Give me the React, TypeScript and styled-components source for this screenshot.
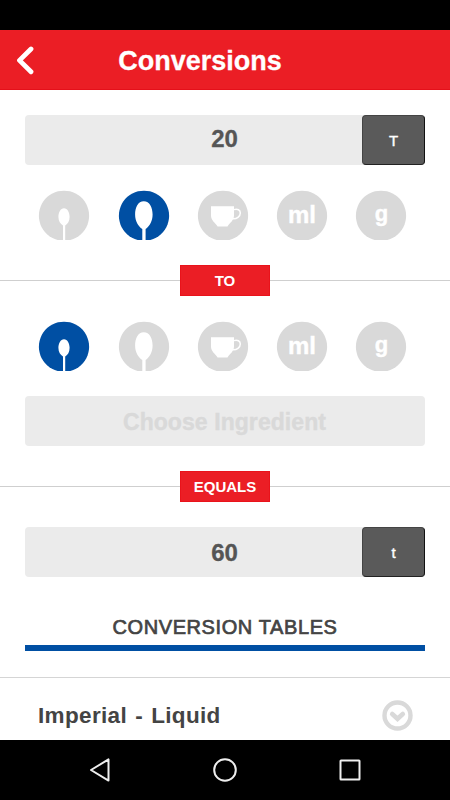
import React from "react";
import styled, { createGlobalStyle } from "styled-components";

const GlobalStyle = createGlobalStyle`
  * { box-sizing: border-box; }
  body {
    margin: 0;
    background: #fff;
    font-family: "Liberation Sans", Arial, sans-serif;
  }
`;

const Screen = styled.div`
  display: flex;
  flex-direction: column;
  width: 450px;
  height: 800px;
  overflow: hidden;
  background: #fff;
`;

const StatusBar = styled.div`
  flex: none;
  height: 30px;
  background: #000;
`;

const Header = styled.header`
  flex: none;
  display: grid;
  grid-template-columns: 50px 300px;
  align-items: center;
  height: 60px;
  background: #eb1e25;
  border-bottom: 1px solid #e5101a;
`;

const BackButton = styled.button`
  display: flex;
  padding: 0 0 0 15px;
  border: 0;
  background: none;
`;

const Title = styled.h1`
  margin: 0;
  padding-top: 2px;
  text-align: center;
  color: #fff;
  font-size: 27px;
  line-height: 32px;
  -webkit-text-stroke: 0.3px #fff;
`;

const Content = styled.main`
  flex: 1;
  min-height: 0;
  overflow: hidden;
  padding-top: 25px;
`;

const Field = styled.div<{ $muted?: boolean }>`
  display: grid;
  grid-template-columns: 62px 1fr 63px;
  grid-template-rows: 50px;
  height: 50px;
  margin: 0 25px;
  border-radius: 4px;
  background: #ebebeb;
  color: ${(p) => (p.$muted ? "#d9d9d9" : "#555")};
`;

const Value = styled.span<{ $placeholder?: boolean; $line?: number }>`
  grid-column: 2;
  text-align: center;
  font-weight: bold;
  font-size: ${(p) => (p.$placeholder ? "23px" : "24px")};
  letter-spacing: ${(p) => (p.$placeholder ? "0.07px" : "0")};
  line-height: ${(p) => p.$line ?? 48}px;
  -webkit-text-stroke: ${(p) => (p.$placeholder ? "0.4px" : "0.3px")} currentColor;
  white-space: nowrap;
`;

const Unit = styled.span`
  display: flex;
  align-items: center;
  justify-content: center;
  border: 1px solid #444;
  border-right-color: #111;
  border-bottom-color: #222;
  border-radius: 4px;
  background: #5a5a5a;
  color: #fff;
  font-size: 15px;
  -webkit-text-stroke: 0.4px #fff;
`;

const UnitRow = styled.div`
  display: flex;
  gap: 29.2px;
  height: 50px;
  margin: 25px 0;
  padding-left: 39.4px;
`;

const UnitButton = styled.button<{ $active: boolean }>`
  display: block;
  flex: none;
  width: 50px;
  height: 50px;
  padding: 0;
  border: 0;
  background: none;
  color: ${(p) => (p.$active ? "#004fa3" : "#d9d9d9")};
  svg { display: block; overflow: visible; }
`;

const Divider = styled.div`
  display: flex;
  align-items: center;
  height: 31px;
  &::before, &::after {
    content: "";
    flex: 1;
    height: 1px;
    background: #cfcfcf;
  }
`;

const DividerLabel = styled.span`
  width: 90px;
  height: 31px;
  border: 1px solid #e9131b;
  background: #eb1e25;
  color: #fff;
  text-align: center;
  font-size: 15px;
  font-weight: bold;
  line-height: 30px;
`;

const TablesHeading = styled.h2`
  display: flex;
  align-items: flex-end;
  justify-content: center;
  height: 74px;
  margin: 0 25px;
  padding-bottom: 6px;
  border-bottom: 6px solid #004fa3;
  color: #444;
  font-size: 20px;
  font-weight: normal;
  line-height: 24px;
  letter-spacing: 0.6px;
  -webkit-text-stroke: 0.7px #444;
`;

const TableRow = styled.div`
  display: flex;
  align-items: center;
  justify-content: space-between;
  height: 76px;
  margin-top: 26px;
  padding: 0 37px 0 38px;
  border-top: 1px solid #d5d5d5;
`;

const RowLabel = styled.span`
  padding-top: 1px;
  color: #444;
  font-size: 22.5px;
  font-weight: bold;
  letter-spacing: 0.35px;
  word-spacing: 1.5px;
`;

const NavBar = styled.nav`
  flex: none;
  display: flex;
  align-items: center;
  justify-content: center;
  gap: 97px;
  height: 60px;
  background: #000;
`;

const FieldGap = styled.div`
  height: 25px;
`;

type UnitKind = "teaspoon" | "tablespoon" | "cup" | "ml" | "g";
const units: UnitKind[] = ["teaspoon", "tablespoon", "cup", "ml", "g"];

function UnitIcon({ kind }: { kind: UnitKind }) {
  return (
    <svg width="50" height="50" viewBox="0 -0.6 50 50">
      <path d="M18.6 49.4A25.1 25.1 0 1 1 31.4 49.4Z" fill="currentColor" />
      {kind === "teaspoon" && (
        <path
          d="M25 17.7C21.5 17.7 19.4 22.1 19.4 26.2C19.4 30.5 21.4 33.5 24 34.8V50H26.2V34.8C28.8 33.5 30.6 30.5 30.6 26.2C30.6 22.1 28.5 17.7 25 17.7Z"
          fill="#fff"
        />
      )}
      {kind === "tablespoon" && (
        <path
          d="M24.8 10.7C19 10.7 16.1 17 16.1 24C16.1 30.5 19.2 36 23.3 38.5V50H26.6V38.5C30.5 36 33.6 30.5 33.6 24C33.6 17 30.6 10.7 24.8 10.7Z"
          fill="#fff"
        />
      )}
      {kind === "cup" && (
        <>
          <path d="M13 15.6H36V25C36 30 32 32 29.5 36H19.6C17 32 13 30 13 25Z" fill="#fff" />
          <path
            d="M36 19C39.5 18 42.3 19.3 42.3 22.4C42.3 26 38.7 28.7 34.5 28.2"
            fill="none"
            stroke="#fff"
            strokeWidth="1.5"
          />
        </>
      )}
      {(kind === "ml" || kind === "g") && (
        <text
          x={kind === "ml" ? 25 : 25.4}
          y={kind === "ml" ? 32.4 : 30.4}
          textAnchor="middle"
          fill="#fff"
          stroke="#fff"
          strokeWidth="0.4"
          fontFamily="Liberation Sans, Arial, sans-serif"
          fontSize={kind === "ml" ? 24 : 22}
          fontWeight="bold"
        >
          {kind}
        </text>
      )}
    </svg>
  );
}

function UnitPicker({ selected }: { selected: UnitKind }) {
  return (
    <UnitRow>
      {units.map((unit) => (
        <UnitButton key={unit} $active={unit === selected} aria-label={unit}>
          <UnitIcon kind={unit} />
        </UnitButton>
      ))}
    </UnitRow>
  );
}

export default function App() {
  return (
    <>
      <GlobalStyle />
      <Screen>
        <StatusBar />
        <Header>
          <BackButton aria-label="Back">
            <svg width="20" height="30" viewBox="0 0 20 30">
              <path d="M16 4L4.5 15.4L16 26.8" fill="none" stroke="#fff" strokeWidth="4.8" strokeLinecap="round" strokeLinejoin="round" />
            </svg>
          </BackButton>
          <Title>Conversions</Title>
        </Header>
        <Content>
          <Field>
            <Value>20</Value>
            <Unit>T</Unit>
          </Field>
          <UnitPicker selected="tablespoon" />
          <Divider>
            <DividerLabel>TO</DividerLabel>
          </Divider>
          <UnitPicker selected="teaspoon" />
          <Field $muted>
            <Value $placeholder $line={52}>Choose Ingredient</Value>
          </Field>
          <FieldGap />
          <Divider>
            <DividerLabel>EQUALS</DividerLabel>
          </Divider>
          <FieldGap />
          <Field>
            <Value $line={52}>60</Value>
            <Unit>t</Unit>
          </Field>
          <TablesHeading>CONVERSION TABLES</TablesHeading>
          <TableRow>
            <RowLabel>Imperial - Liquid</RowLabel>
            <svg width="31" height="31" viewBox="0 0 31 31" fill="none" stroke="#d9d9d9">
              <circle cx="15.5" cy="15.5" r="13" strokeWidth="4.4" />
              <path d="M10.2 14L15.5 18.8L20.8 14" strokeWidth="4.6" strokeLinecap="round" />
            </svg>
          </TableRow>
        </Content>
        <NavBar>
          <svg width="28" height="28" viewBox="0 0 28 28" fill="none" stroke="#eee" strokeWidth="2">
            <path d="M5 14L22.5 3.4V24.6Z" strokeLinejoin="round" />
          </svg>
          <svg width="28" height="28" viewBox="0 0 28 28" fill="none" stroke="#eee" strokeWidth="2">
            <circle cx="14" cy="14" r="10.8" />
          </svg>
          <svg width="28" height="28" viewBox="0 0 28 28" fill="none" stroke="#eee" strokeWidth="2">
            <rect x="4.5" y="4.5" width="19" height="19" rx="0.5" />
          </svg>
        </NavBar>
      </Screen>
    </>
  );
}
